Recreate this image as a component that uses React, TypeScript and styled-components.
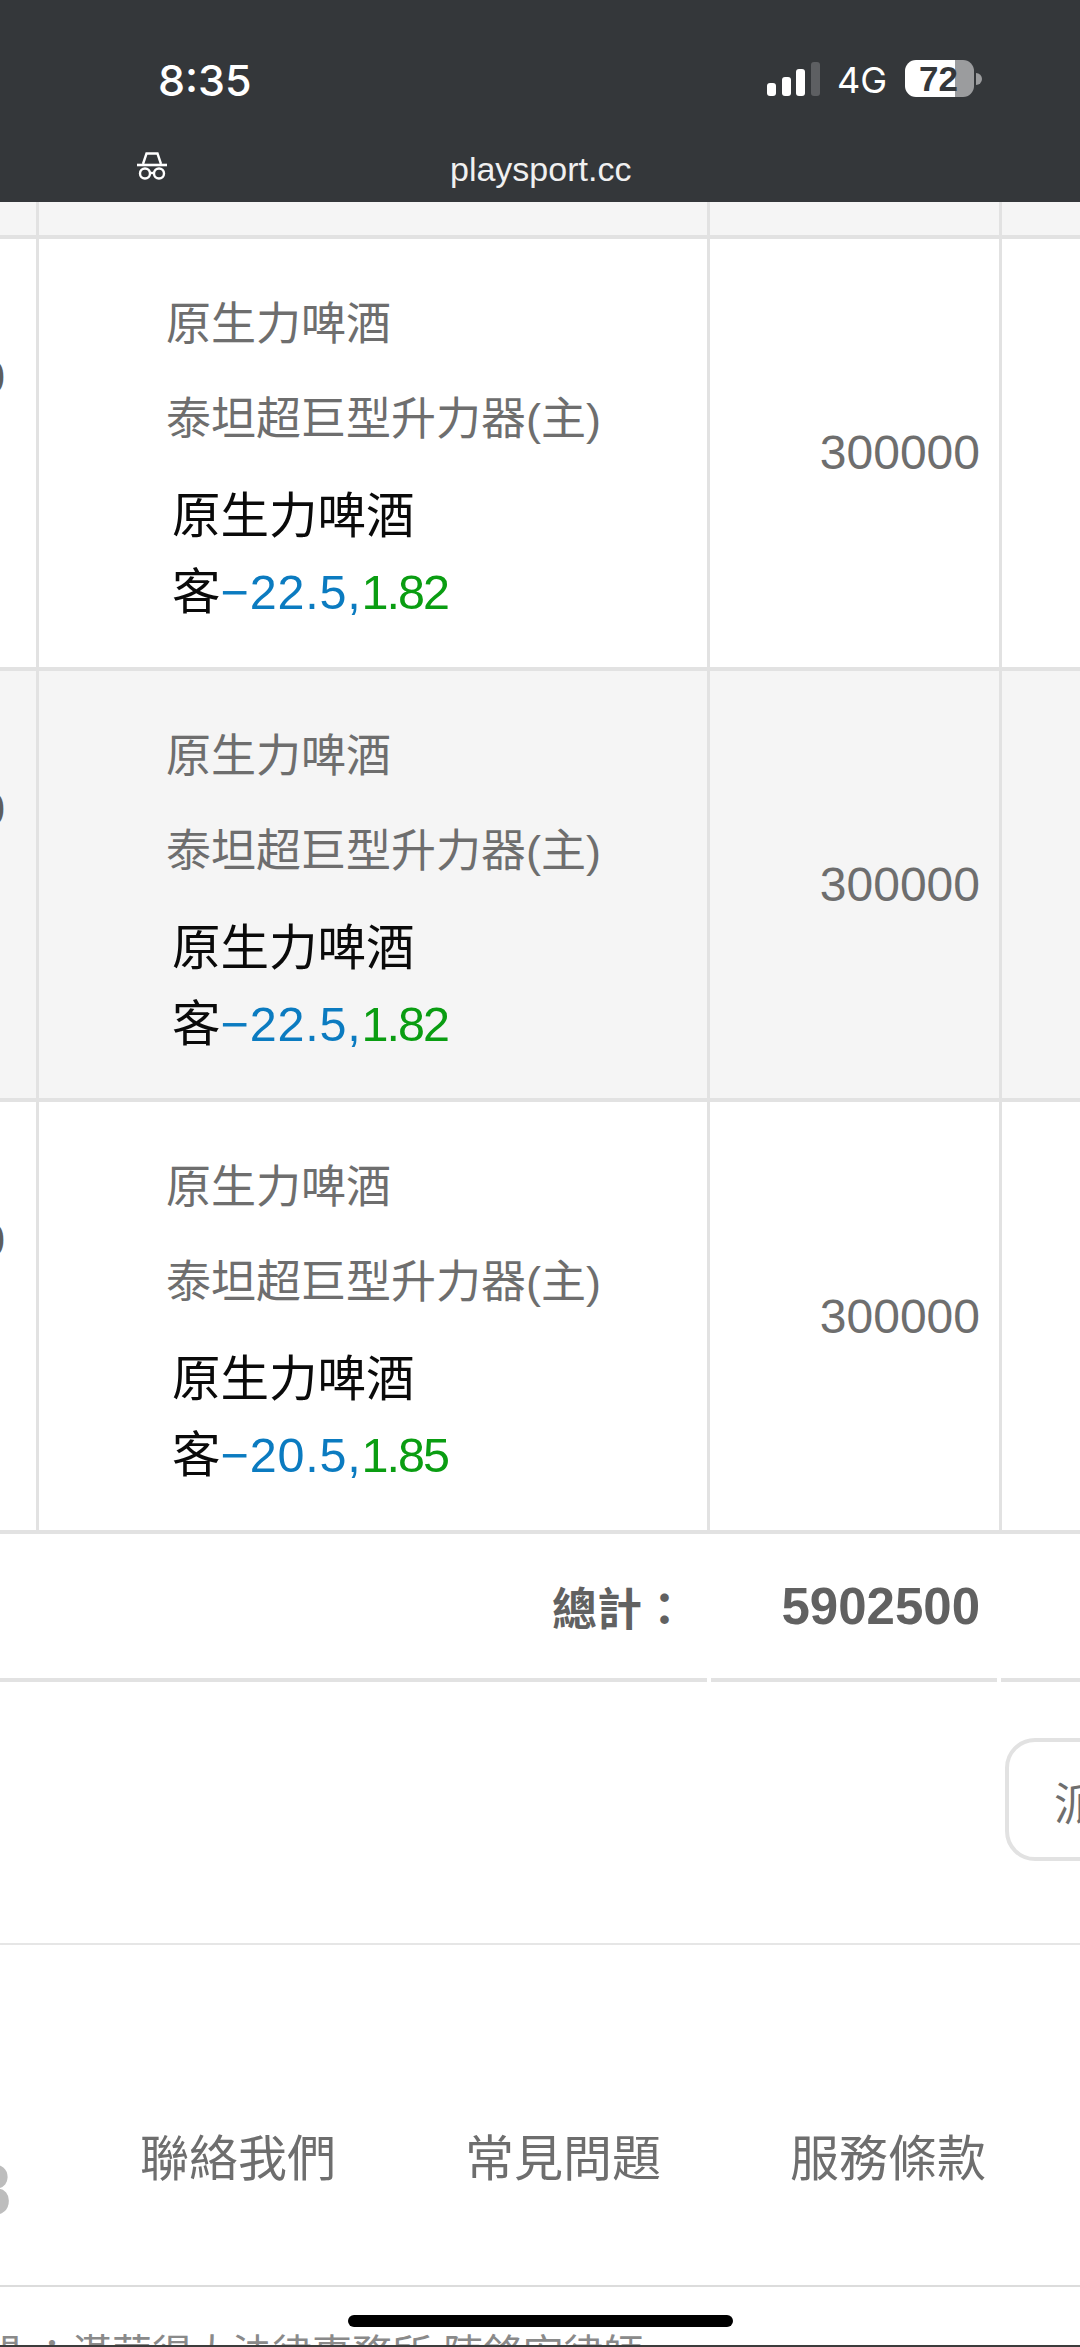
import React from "react";
import styled, { createGlobalStyle } from "styled-components";

const CJK = `"Liberation Sans", "Noto Sans CJK TC", sans-serif`;

const Global = createGlobalStyle`
  html, body { margin: 0; padding: 0; background: #fff; }
  * { box-sizing: border-box; }
`;

const Page = styled.div`
  position: relative;
  width: 1080px;
  height: 2347px;
  overflow: hidden;
  display: flex;
  flex-direction: column;
  background: #fff;
  font-family: ${CJK};
  color: #6e6e6e;
`;

const Header = styled.header`
  height: 202px;
  flex: none;
  background: #34373a;
  color: #fff;
  display: flex;
  flex-direction: column;
`;

const StatusBar = styled.div`
  height: 137px;
  padding: 54px 0 0 158px;
  display: flex;
  align-items: flex-start;
`;

const Clock = styled.div`
  width: 609px;
  font-family: Inter, sans-serif;
  font-size: 43px;
  line-height: 52px;
  font-weight: 500;
`;

const Network = styled.div`
  width: 67px;
  margin: 5px 0 0 -1px;
  font-family: Inter, sans-serif;
  font-size: 36px;
  line-height: 42px;
  font-weight: 400;
`;

const Battery = styled.div`
  width: 69px;
  height: 37px;
  margin: 6px 0 0 1px;
  border-radius: 11px;
  background: linear-gradient(to right, #fff 0 50px, #9b9c9e 50px);
  color: #34373a;
  font-family: "Liberation Sans", sans-serif;
  font-size: 35px;
  line-height: 37px;
  font-weight: 700;
  padding-left: 14px;
`;

const BatteryNub = styled.div`
  width: 6px;
  height: 12px;
  margin: 19px 0 0 2px;
  border-radius: 0 6px 6px 0;
  background: #9b9c9e;
`;

const UrlBar = styled.div`
  position: relative;
  flex: 1;
  display: flex;
  align-items: flex-start;
  padding: 13px 0 0 137px;
`;

const Url = styled.div`
  margin-left: 283px;
  font-size: 34px;
  line-height: 38px;
  color: #f0f0f0;
`;

const Row = styled.div<{ $striped?: boolean; $height: string }>`
  height: ${(p) => p.$height};
  flex: none;
  display: grid;
  grid-template-columns: 39px 671px 292px 1fr;
  background: ${(p) => (p.$striped ? "#f5f5f5" : "#fff")};
  border-bottom: 4px solid #e2e2e2;
`;

const Cell = styled.div`
  border-right: 3px solid #e2e2e2;
  min-width: 0;
  &:last-child { border-right: 0; }
`;

const ClippedCell = styled(Cell)`
  overflow: hidden;
  display: flex;
  justify-content: flex-end;
  padding: 112px 31px 0 0;
  font-size: 46px;
  line-height: 52px;
  color: #5e5e5e;
`;

const GameCell = styled(Cell)`
  padding: 38px 0 0 127px;
`;

const GrayLine = styled.div`
  font-size: 45px;
  line-height: 95px;
  white-space: nowrap;
  color: #6e6e6e;
`;

const PickBlock = styled.div`
  margin: 11px 0 0 6px;
  font-size: 48.5px;
  line-height: 76px;
  white-space: nowrap;
  color: #0a0a0a;
`;

const Handicap = styled.span`
  color: #0b7bc0;
  letter-spacing: 0.8px;
`;

const Odds = styled.span`
  color: #0a9d12;
  letter-spacing: -2px;
`;

const AmountCell = styled(Cell)`
  display: flex;
  align-items: center;
  justify-content: flex-end;
  padding-right: 19px;
  font-size: 48px;
  color: #6e6e6e;
`;

const TotalRow = styled.div`
  height: 148px;
  flex: none;
  display: grid;
  grid-template-columns: 707px 286px 1fr;
  column-gap: 4px;
`;

const TotalCell = styled.div`
  display: flex;
  align-items: center;
  justify-content: flex-end;
  border-bottom: 4px solid #e2e2e2;
  font-weight: 700;
  color: #616161;
`;

const TotalLabel = styled(TotalCell)`
  font-size: 45px;
  padding-right: 20px;
`;

const TotalValue = styled(TotalCell)`
  font-size: 51px;
  padding-right: 17px;
`;

const ActionBar = styled.div`
  height: 263px;
  flex: none;
  padding: 56px 0 0 1005px;
  border-bottom: 2px solid #e6e6e6;
`;

const ActionButton = styled.button`
  display: block;
  width: 220px;
  height: 123px;
  padding: 0 0 0 45px;
  border: 4px solid #e2e2e2;
  border-radius: 30px;
  background: #fff;
  font-family: ${CJK};
  font-size: 46px;
  text-align: left;
  color: #6e6e6e;
`;

const Footer = styled.nav`
  height: 342px;
  flex: none;
  display: flex;
  align-items: flex-start;
  padding-top: 182px;
  border-bottom: 2px solid #dcdcdc;
`;

const LogoClip = styled.div`
  width: 11px;
  height: 90px;
  margin-top: 18px;
  flex: none;
  overflow: hidden;
  display: flex;
  justify-content: flex-end;
  font-size: 72px;
  line-height: 90px;
  font-weight: 700;
  color: #bdbdbd;
`;

const FooterLinks = styled.div`
  display: flex;
  gap: 129px;
  margin-left: 129px;
`;

const FooterLink = styled.a`
  font-size: 49px;
  line-height: 64px;
  white-space: nowrap;
  color: #6e6e6e;
`;

const Legal = styled.div`
  flex: 1;
  overflow: hidden;
  padding: 45px 0 0 0;
  margin-left: -19px;
  font-size: 40px;
  line-height: 44px;
  white-space: nowrap;
  color: #8a8a8a;
`;

const BottomEdge = styled.div`
  height: 2px;
  flex: none;
  background: #3c3c3c;
`;

const HomeIndicator = styled.div`
  position: absolute;
  left: 348px;
  top: 2315px;
  width: 385px;
  height: 12px;
  border-radius: 6px;
  background: #000;
`;

const Signal = () => (
  <svg width="54" height="34" viewBox="0 0 54 34" style={{ marginRight: 17, marginTop: 8, flex: "none" }}>
    <rect x="0" y="21" width="9" height="13" rx="3" fill="#fff" />
    <rect x="15" y="15" width="9" height="19" rx="3" fill="#fff" />
    <rect x="29" y="7" width="9" height="27" rx="3" fill="#fff" />
    <rect x="44" y="0" width="9" height="34" rx="3" fill="#5d5f62" />
  </svg>
);

const Incognito = () => (
  <svg width="30" height="28" viewBox="0 0 30 28" fill="none" stroke="#fff" strokeWidth="2.4" style={{ flex: "none", marginTop: 2 }}>
    <path d="M6 12 L9.5 1.5 H20.5 L24 12" />
    <path d="M0 13 H30" strokeWidth="2.6" />
    <circle cx="8" cy="21.5" r="5" />
    <circle cx="22" cy="21.5" r="5" />
    <path d="M13 21 H17" />
  </svg>
);

const rows = [
  { handicap: "−22.5,", odds: "1.82", striped: false, height: "431.5px" },
  { handicap: "−22.5,", odds: "1.82", striped: true, height: "431.5px" },
  { handicap: "−20.5,", odds: "1.85", striped: false, height: "432px" },
];

export default function App() {
  return (
    <Page>
      <Global />
      <Header>
        <StatusBar>
          <Clock>8:35</Clock>
          <Signal />
          <Network>4G</Network>
          <Battery>72</Battery>
          <BatteryNub />
        </StatusBar>
        <UrlBar>
          <Incognito />
          <Url>playsport.cc</Url>
        </UrlBar>
      </Header>

      <Row $striped $height="37px">
        <Cell />
        <Cell />
        <Cell />
        <Cell />
      </Row>

      {rows.map((r, i) => (
        <Row key={i} $striped={r.striped} $height={r.height}>
          <ClippedCell>300000</ClippedCell>
          <GameCell>
            <GrayLine>原生力啤酒</GrayLine>
            <GrayLine>泰坦超巨型升力器(主)</GrayLine>
            <PickBlock>
              原生力啤酒
              <br />
              客<Handicap>{r.handicap}</Handicap>
              <Odds>{r.odds}</Odds>
            </PickBlock>
          </GameCell>
          <AmountCell>300000</AmountCell>
          <Cell />
        </Row>
      ))}

      <TotalRow>
        <TotalLabel>總計：</TotalLabel>
        <TotalValue>5902500</TotalValue>
        <TotalCell />
      </TotalRow>

      <ActionBar>
        <ActionButton>派彩</ActionButton>
      </ActionBar>

      <Footer>
        <LogoClip>8</LogoClip>
        <FooterLinks>
          <FooterLink>聯絡我們</FooterLink>
          <FooterLink>常見問題</FooterLink>
          <FooterLink>服務條款</FooterLink>
        </FooterLinks>
      </Footer>

      <Legal>問 ：漢華得大法律事務所 陳鋒宏律師</Legal>
      <BottomEdge />
      <HomeIndicator />
    </Page>
  );
}
